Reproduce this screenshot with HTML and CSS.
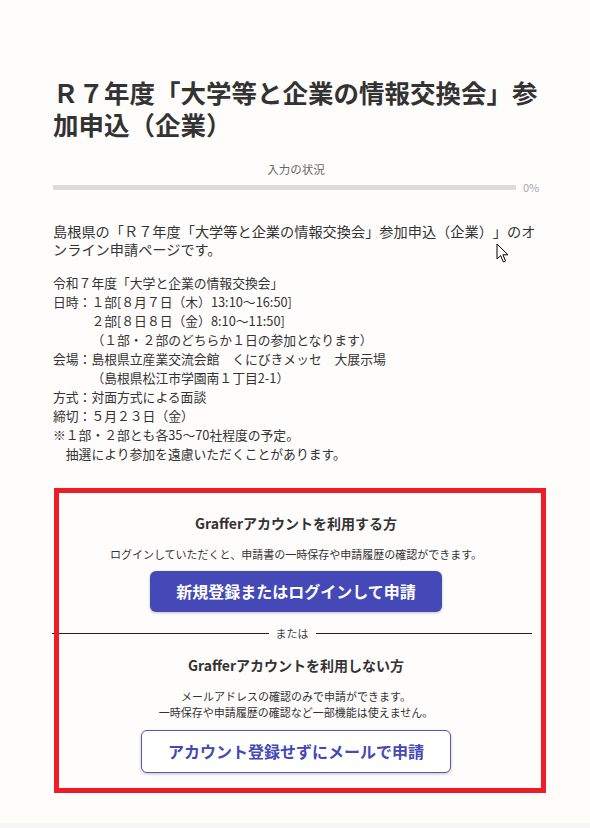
FILE: index.html
```html
<!DOCTYPE html>
<html lang="ja">
<head>
  <meta charset="UTF-8" />
  <meta name="viewport" content="width=device-width, initial-scale=1.0"/>
  <title>Ｒ７年度「大学等と企業の情報交換会」参加申込（企業）</title>
  <link rel="stylesheet" href="styles.css">
</head>
<body>

  <main class="page">
    <h1 class="form-title">Ｒ７年度「大学等と企業の情報交換会」参加申込（企業）</h1>

    <!-- Progress -->
    <div class="progress">
      <p class="progress-label">入力の状況</p>
      <div class="progress-row">
        <div class="progress-bar"><span class="progress-fill" style="width:0%"></span></div>
        <span class="progress-value">0%</span>
      </div>
    </div>

    <p class="lead">島根県の「Ｒ７年度「大学等と企業の情報交換会」参加申込（企業）」のオンライン申請ページです。</p>

    <div class="details">
      <p>令和７年度「大学と企業の情報交換会」</p>
      <p>日時：１部[８月７日（木）13:10〜16:50]</p>
      <p>　　　２部[８日８日（金）8:10〜11:50]</p>
      <p>　　　（１部・２部のどちらか１日の参加となります）</p>
      <p>会場：島根県立産業交流会館　くにびきメッセ　大展示場</p>
      <p>　　　（島根県松江市学園南１丁目2-1）</p>
      <p>方式：対面方式による面談</p>
      <p>締切：５月２３日（金）</p>
      <p>※１部・２部とも各35〜70社程度の予定。</p>
      <p>　抽選により参加を遠慮いただくことがあります。</p>
    </div>

    <section class="login">
      <h3>Grafferアカウントを利用する方</h3>
      <p class="login-note">ログインしていただくと、申請書の一時保存や申請履歴の確認ができます。</p>
      <a class="btn btn-primary" href="#">新規登録またはログインして申請</a>

      <div class="divider"><span>または</span></div>

      <h3>Grafferアカウントを利用しない方</h3>
      <p class="login-note">メールアドレスの確認のみで申請ができます。<br>一時保存や申請履歴の確認など一部機能は使えません。</p>
      <a class="btn btn-outline" href="#">アカウント登録せずにメールで申請</a>

      <!-- highlight frame -->
      <div class="highlight"></div>
    </section>

    <svg class="cursor" width="14" height="21" viewBox="0 0 14 21">
      <path d="M1 1 L1 16 L4.6 12.6 L7.4 19 L9.6 18 L6.9 11.8 L12 11.8 Z" fill="#fff" stroke="#000" stroke-width="1" stroke-linejoin="round"/>
    </svg>
  </main>

</body>
</html>
```

FILE: styles.css
```css
* {
  box-sizing: border-box;
}

body {
  margin: 0;
  padding: 0;
  background: #f6f6f6;
  color: #333;
  font-family: "Noto Sans CJK JP", "Noto Sans", sans-serif;
  text-spacing-trim: space-all;
}

.page {
  position: relative;
  min-height: 823px;
  background: #fffdfc;
  padding: 76px 51px 0 53px;
}

.form-title {
  margin: 0;
  font-size: 25.5px;
  line-height: 32px;
  font-weight: bold;
  color: #333;
}

/* Progress */
.progress-label {
  margin: 20px 0 0;
  text-align: center;
  font-size: 11.5px;
  line-height: 18px;
  color: #666;
}

.progress-row {
  display: flex;
  align-items: center;
  gap: 7px;
  margin-top: 1px;
}

.progress-bar {
  flex: 1;
  height: 5px;
  background: #dcdcdc;
}

.progress-fill {
  display: block;
  height: 100%;
  background: #4347b8;
}

.progress-value {
  width: 16px;
  font-size: 11px;
  line-height: 16px;
  color: #a3a7b0;
}

.lead {
  margin: 28px -6px 0 0;
  font-size: 14.2px;
  line-height: 17.6px;
}

.details {
  margin-top: 15px;
  font-size: 12.8px;
  line-height: 19px;
}

.details p {
  margin: 0;
}

/* Login choice */
.login {
  position: relative;
  margin-top: 25px;
  padding: 25px 0 21px;
  text-align: center;
}

.login h3 {
  margin: 0;
  font-size: 14px;
  line-height: 20px;
  font-weight: bold;
}

.login-note {
  margin: 13px 0 0;
  font-size: 11px;
  line-height: 16px;
}

.btn {
  display: inline-block;
  padding: 0 26px;
  border-radius: 6px;
  font-size: 16px;
  font-weight: bold;
  text-decoration: none;
  box-shadow: 0 1px 3px rgba(0, 0, 0, 0.25);
}

.btn-primary {
  margin-top: 9px;
  height: 41px;
  line-height: 41px;
  background: #4548b7;
  color: #fff;
}

.btn-outline {
  margin-top: 10px;
  height: 43px;
  line-height: 41px;
  background: #fff;
  color: #4548b7;
  border: 1px solid #5558c0;
}

.divider {
  display: flex;
  align-items: center;
  gap: 7px;
  margin: 13px 7px 0 -1px;
  font-size: 11px;
  line-height: 16px;
  color: #444;
}

.divider::before,
.divider::after {
  content: "";
  flex: 1;
  height: 1px;
  background: #222;
}

.divider + h3 {
  margin-top: 14px;
}

.highlight {
  position: absolute;
  top: 0;
  left: 1px;
  right: -7px;
  height: 305px;
  border: 5px solid #ee1c25;
  pointer-events: none;
}

.cursor {
  position: absolute;
  left: 496px;
  top: 243px;
}
```
